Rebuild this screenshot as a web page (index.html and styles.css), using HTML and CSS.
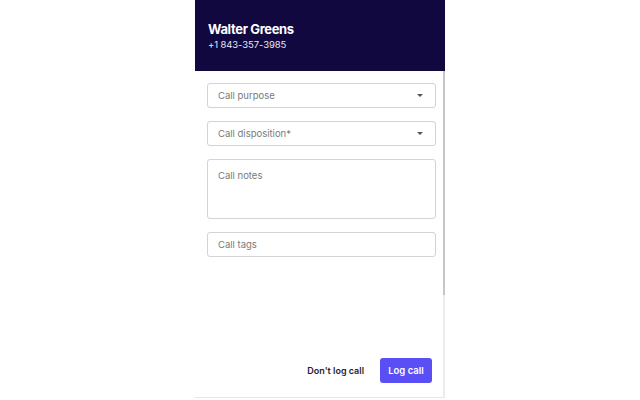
FILE: index.html
```html
<!DOCTYPE html>
<html lang="en">
<head>
  <meta charset="UTF-8">
  <title>Log call</title>
  <link rel="stylesheet" href="styles.css">
</head>
<body>
  <div class="page">
    <div class="panel">
      <div class="contact">
        <div class="contact-name">Walter Greens</div>
        <div class="contact-phone">+1 843-357-3985</div>
      </div>
      <div class="panel-body">
        <div class="form">
          <div class="field select">
            <span class="placeholder">Call purpose</span>
            <span class="caret"></span>
          </div>
          <div class="field select">
            <span class="placeholder">Call disposition*</span>
            <span class="caret"></span>
          </div>
          <div class="field notes">
            <span class="placeholder">Call notes</span>
          </div>
          <div class="field">
            <span class="placeholder">Call tags</span>
          </div>
          <div class="actions">
            <button class="btn-link">Don't log call</button>
            <button class="btn-primary">Log call</button>
          </div>
        </div>
        <div class="scrollbar"><div class="thumb"></div></div>
      </div>
    </div>
  </div>
</body>
</html>
```

FILE: styles.css
```css
body { margin: 0; font-family: Inter, "Noto Sans", sans-serif; background: #fff; }
.page { height: 400px; }
.panel { width: 250px; height: 397px; margin: 0 auto; display: flex; flex-direction: column; border-bottom: 1px solid #e6e6e6; }

.contact { height: 71px; background: #110840; color: #fff; padding: 21px 0 0 13px; box-sizing: border-box; }
.contact-name { font-size: 13px; font-weight: 700; letter-spacing: -0.35px; line-height: 16px; }
.contact-phone { font-size: 9.5px; line-height: 12px; margin-top: 2px; color: #e8e6f2; letter-spacing: -0.1px; }

.panel-body { flex: 1; display: flex; }
.form { flex: 1; padding: 12px 7px 14px 12px; display: flex; flex-direction: column; }
.scrollbar { width: 2px; background: #ececec; }
.thumb { height: 224px; background: #c6c6c6; }

.field { height: 25px; border: 1px solid #d3d3d3; border-radius: 3px; box-sizing: border-box; display: flex; align-items: center; padding: 0 10px; margin-bottom: 13px; }
.field.notes { height: 60px; align-items: flex-start; padding-top: 10px; }
.placeholder { font-size: 9.5px; color: #7a7a7a; flex: 1; }
.caret { width: 0; height: 0; border-left: 3.5px solid transparent; border-right: 3.5px solid transparent; border-top: 3.5px solid #555; margin-right: 2px; }

.actions { margin-top: auto; display: flex; justify-content: flex-end; align-items: center; gap: 16px; padding-right: 4px; }
.btn-link { background: none; border: none; font-family: inherit; font-size: 9px; font-weight: 600; color: #1d1b33; padding: 0; }
.btn-primary { background: #5a4ef5; color: #fff; border: none; border-radius: 3px; font-family: inherit; font-size: 9.5px; font-weight: 600; width: 52px; height: 25px; padding: 0; }
```
